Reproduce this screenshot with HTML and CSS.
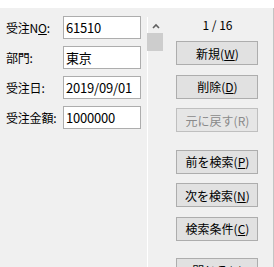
FILE: index.html
```html
<!DOCTYPE html>
<html lang="ja">
<head>
  <meta charset="UTF-8" />
  <meta name="viewport" content="width=device-width, initial-scale=1.0"/>
  <title>受注入力</title>
  <link rel="stylesheet" href="styles.css">
</head>
<body>
  <div class="topband"></div>
  <div class="main">
    <div class="fields">
      <div class="row">
        <label class="caption">受注N<u>O</u>:</label>
        <input class="box" type="text" value="61510" />
      </div>
      <div class="row">
        <label class="caption">部門:</label>
        <input class="box" type="text" value="東京" />
      </div>
      <div class="row">
        <label class="caption">受注日:</label>
        <input class="box" type="text" value="2019/09/01" />
      </div>
      <div class="row">
        <label class="caption">受注金額:</label>
        <input class="box" type="text" value="1000000" />
      </div>
    </div>

    <div class="divider"></div>

    <div class="scroll">
      <svg class="arrow" width="8" height="6" viewBox="0 0 8 6">
        <path d="M1 5 L4 2 L7 5" fill="none" stroke="#606060" stroke-width="1.6"/>
      </svg>
      <div class="thumb"></div>
    </div>

    <div class="actions">
      <div class="counter">1 / 16</div>
      <button class="btn">新規(<u>W</u>)</button>
      <button class="btn">削除(<u>D</u>)</button>
      <button class="btn" disabled>元に戻す(R)</button>
      <button class="btn group">前を検索(<u>P</u>)</button>
      <button class="btn">次を検索(<u>N</u>)</button>
      <button class="btn">検索条件(<u>C</u>)</button>
      <button class="btn group">閉じる(<u>L</u>)</button>
    </div>
  </div>
</body>
</html>
```

FILE: styles.css
```css
body {
  margin: 0;
  width: 274px;
  height: 267px;
  overflow: hidden;
  background-color: #f0f0f0;
  font-family: "Noto Sans CJK JP", "Noto Sans", sans-serif;
  font-size: 12px;
  color: #000;
}
.topband {
  height: 8px;
  background-color: #fff;
}
.main {
  display: flex;
  height: 259px;
}
.fields {
  width: 147px;
  padding-left: 6px;
  padding-top: 8px;
}
.row {
  display: flex;
  align-items: center;
  height: 23px;
  margin-bottom: 7px;
}
.caption {
  width: 57px;
  white-space: nowrap;
  letter-spacing: -0.2px;
}
.box {
  box-sizing: border-box;
  width: 78px;
  height: 23px;
  margin: 0;
  padding: 0 2px;
  border: 1px solid #adadad;
  background-color: #fff;
  font-family: "Noto Sans CJK JP", "Noto Sans", sans-serif;
  font-size: 13px;
  letter-spacing: -0.2px;
  color: #000;
  outline: none;
}
.divider {
  width: 1px;
  margin-top: 9px;
  background-color: #fff;
}
.scroll {
  width: 16px;
  display: flex;
  flex-direction: column;
  align-items: center;
}
.arrow {
  margin-top: 15px;
  margin-left: 1px;
}
.thumb {
  width: 16px;
  height: 18px;
  margin-top: 4px;
  background-color: #cdcdcd;
}
.actions {
  width: 101px;
  padding-left: 13px;
  border-right: 1px solid #c4c4c4;
  display: flex;
  flex-direction: column;
}
.counter {
  width: 82px;
  margin-top: 9px;
  height: 16px;
  line-height: 16px;
  text-align: center;
  font-size: 12px;
  margin-bottom: 8px;
}
.btn {
  box-sizing: border-box;
  width: 82px;
  height: 24px;
  flex: none;
  margin: 0 0 9.5px 0;
  padding: 0;
  border: 1px solid #adadad;
  background-color: #e1e1e1;
  font-family: "Noto Sans CJK JP", "Noto Sans", sans-serif;
  font-size: 12px;
  color: #000;
}
.btn:disabled {
  border-color: #bfbfbf;
  background-color: #e6e6e6;
  color: #8a8a8a;
}
.btn.group {
  margin-top: 8px;
}
```
